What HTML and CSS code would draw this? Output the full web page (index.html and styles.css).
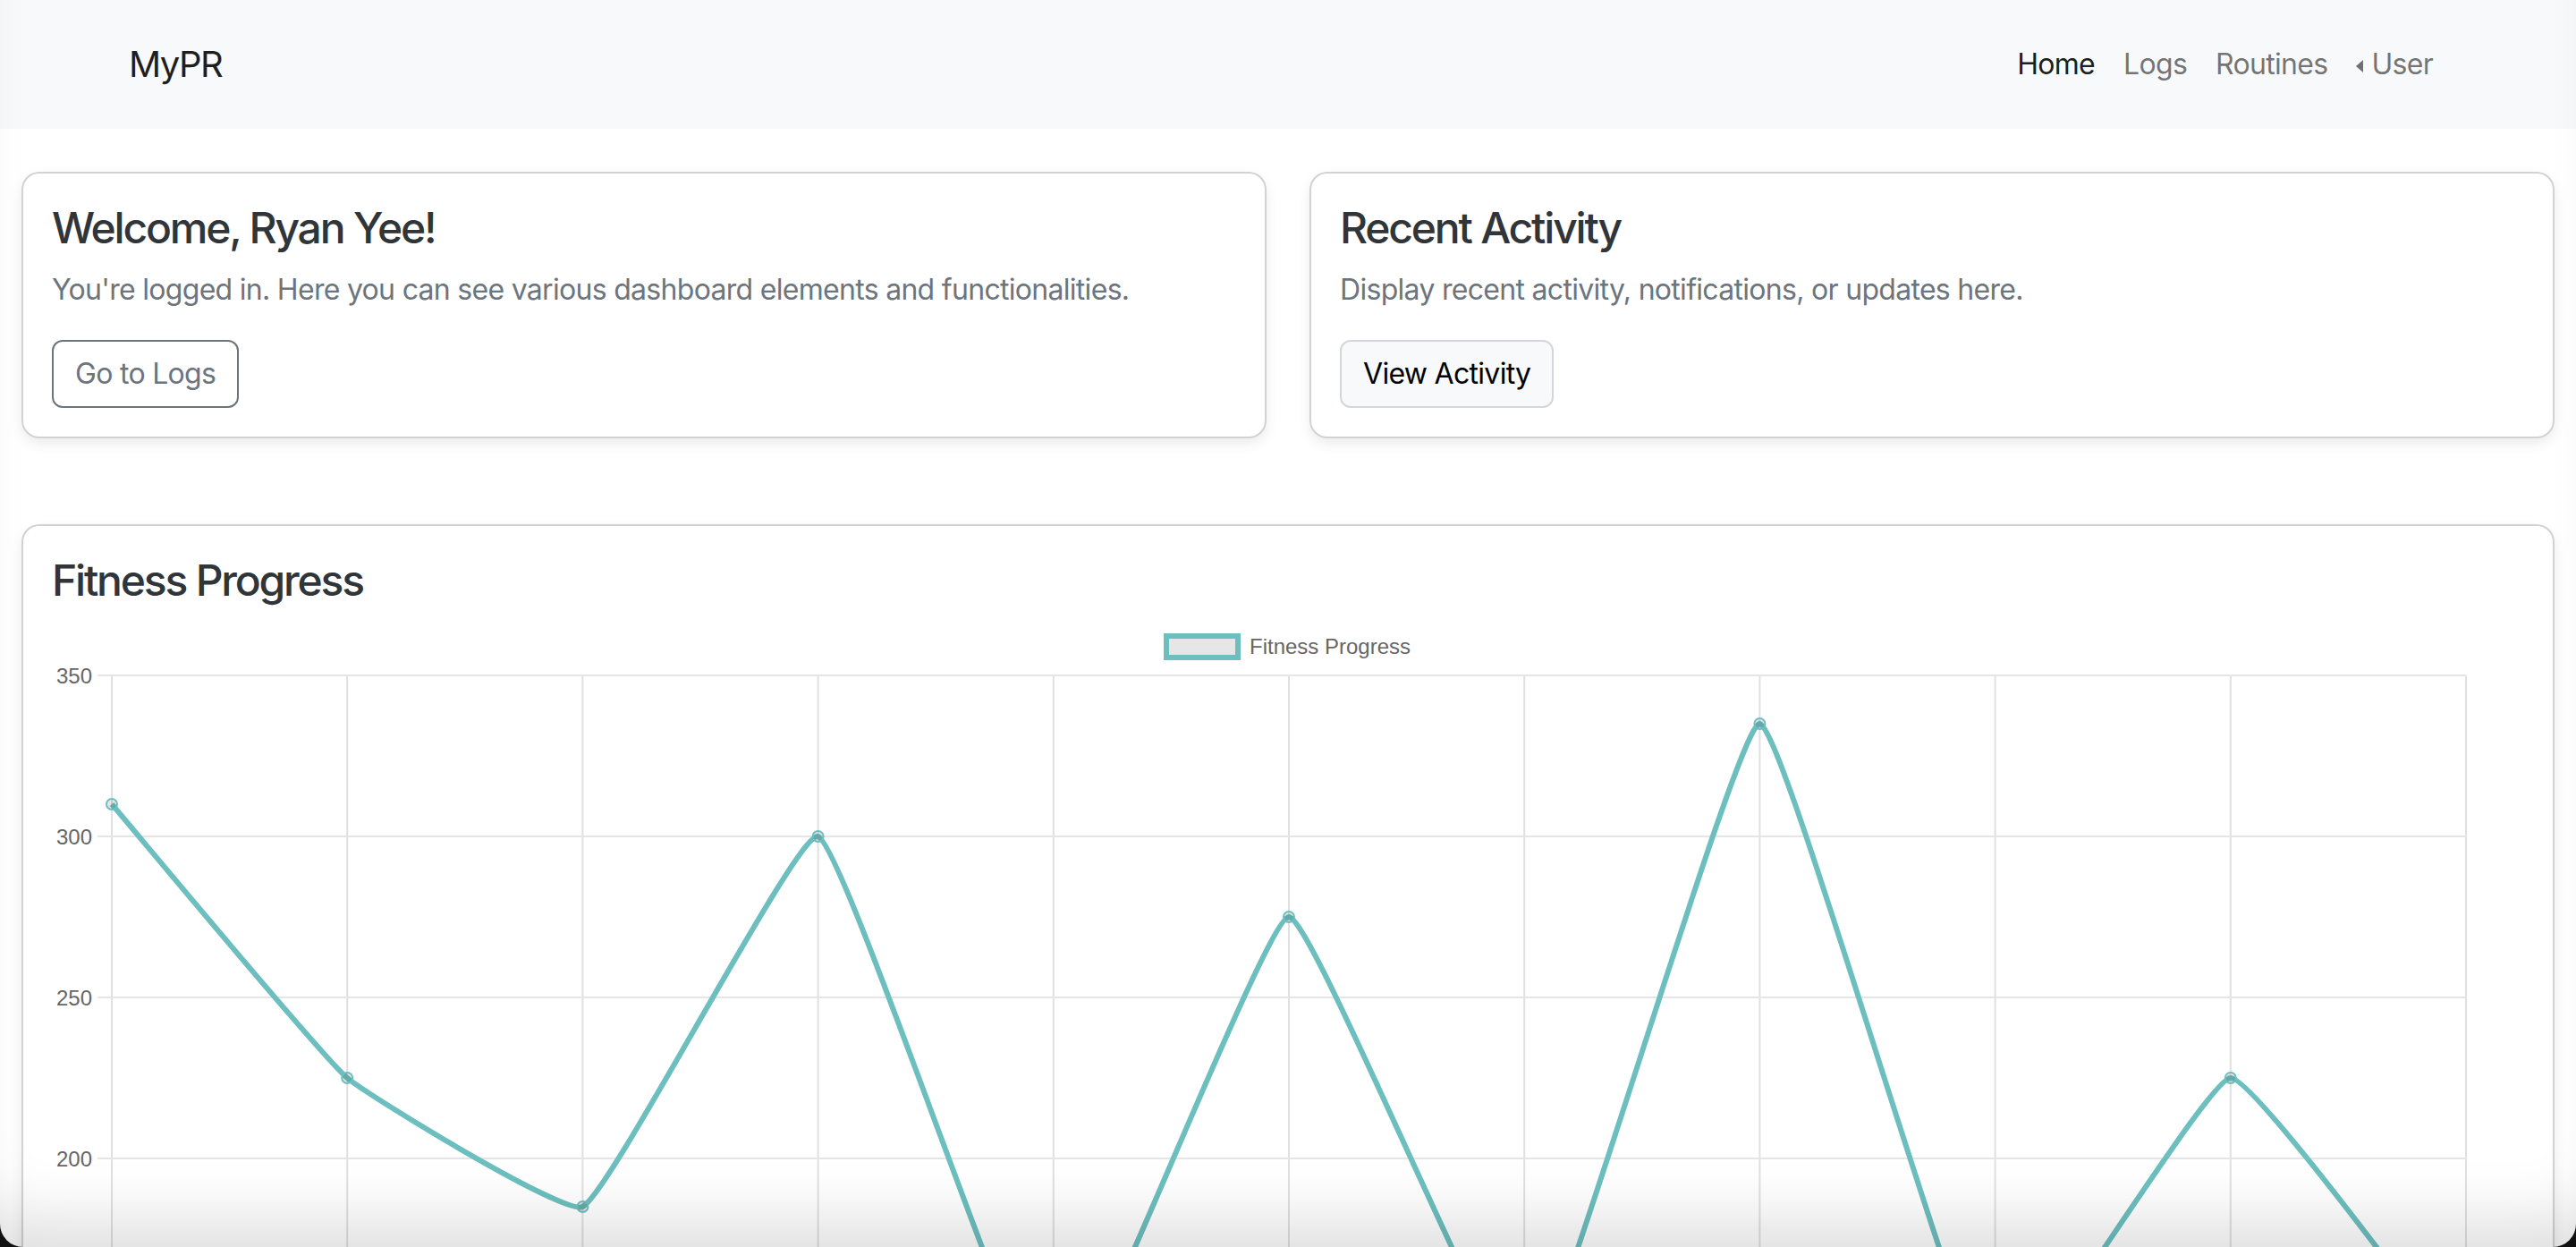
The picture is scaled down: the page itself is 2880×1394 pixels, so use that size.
FILE: index.html
```html
<!DOCTYPE html>
<html lang="en">
<head>
<meta charset="utf-8">
<title>MyPR</title>
<link rel="stylesheet" href="styles.css">
</head>
<body>
<nav class="navbar">
  <div class="navbar-inner">
    <a class="brand" href="#">MyPR</a>
    <ul class="nav-links">
      <li><a class="nav-link active" href="#">Home</a></li>
      <li><a class="nav-link" href="#">Logs</a></li>
      <li><a class="nav-link" href="#">Routines</a></li>
      <li><a class="nav-link dropstart" href="#">User</a></li>
    </ul>
  </div>
</nav>
<main class="page">
  <div class="row-two">
    <section class="card">
      <h4 class="card-title">Welcome, Ryan Yee!</h4>
      <p class="card-text">You're logged in. Here you can see various dashboard elements and functionalities.</p>
      <a class="btn btn-outline" href="#">Go to Logs</a>
    </section>
    <section class="card">
      <h4 class="card-title">Recent Activity</h4>
      <p class="card-text">Display recent activity, notifications, or updates here.</p>
      <a class="btn btn-light" href="#">View Activity</a>
    </section>
  </div>
  <section class="card chart-card">
    <h4 class="card-title">Fitness Progress</h4>
    <svg class="chart-svg" width="2764" height="1030" viewBox="0 0 2764 1030">
      <g class="legend">
        <rect x="1246" y="18" width="80" height="24" class="legend-box"/>
        <text x="1339" y="38" class="legend-text">Fitness Progress</text>
      </g>
      <g class="grid-v">
        <line x1="67" y1="62" x2="67" y2="978"/>
        <line x1="330.2" y1="62" x2="330.2" y2="978"/>
        <line x1="593.4" y1="62" x2="593.4" y2="978"/>
        <line x1="856.6" y1="62" x2="856.6" y2="978"/>
        <line x1="1119.8" y1="62" x2="1119.8" y2="978"/>
        <line x1="1383" y1="62" x2="1383" y2="978"/>
        <line x1="1646.2" y1="62" x2="1646.2" y2="978"/>
        <line x1="1909.4" y1="62" x2="1909.4" y2="978"/>
        <line x1="2172.6" y1="62" x2="2172.6" y2="978"/>
        <line x1="2435.8" y1="62" x2="2435.8" y2="978"/>
        <line x1="2699" y1="62" x2="2699" y2="978"/>
      </g>
      <g class="grid-h">
        <line x1="51" y1="62" x2="2699" y2="62"/>
        <line x1="51" y1="242" x2="2699" y2="242"/>
        <line x1="51" y1="422" x2="2699" y2="422"/>
        <line x1="51" y1="602" x2="2699" y2="602"/>
        <line x1="51" y1="782" x2="2699" y2="782"/>
        <line x1="51" y1="962" x2="2699" y2="962"/>
      </g>
      <g class="y-labels">
        <text x="45" y="70.5">350</text>
        <text x="45" y="250.5">300</text>
        <text x="45" y="430.5">250</text>
        <text x="45" y="610.5">200</text>
        <text x="45" y="790.5">150</text>
        <text x="45" y="970.5">100</text>
      </g>
      <path class="data-line" d=""/>
      <g class="data-points"></g>
    </svg>
  </section>
</main>
<div class="window-frame"></div>
<script src="chart.js"></script>
</body>
</html>
```

FILE: styles.css
```css
* { box-sizing: border-box; }

html, body {
  margin: 0;
  padding: 0;
}

body {
  background: #ffffff;
  color: #212529;
  font-family: "Inter", "Roboto", "Noto Sans", sans-serif;
  font-size: 32px;
  line-height: 1.5;
  letter-spacing: -0.7px;
}

a { text-decoration: none; }

.navbar {
  background: #f8f9fa;
}

.navbar-inner {
  max-width: 2640px;
  height: 144px;
  margin: 0 auto;
  padding: 0 24px;
  display: flex;
  align-items: center;
  justify-content: space-between;
}

.brand {
  font-size: 40px;
  line-height: 60px;
  letter-spacing: -1.5px;
  color: rgba(0, 0, 0, 0.9);
}

.nav-links {
  list-style: none;
  margin: 0;
  padding: 0;
  display: flex;
  align-items: center;
}

.nav-link {
  display: block;
  padding: 16px 16px;
  font-size: 32px;
  line-height: 48px;
  color: rgba(0, 0, 0, 0.55);
}

.nav-link.active {
  color: rgba(0, 0, 0, 0.9);
}

.dropstart::before {
  content: "";
  display: inline-block;
  margin-right: 9px;
  vertical-align: 2px;
  border-top: 7.5px solid transparent;
  border-bottom: 7.5px solid transparent;
  border-right: 8.5px solid currentColor;
  border-left: 0;
}

.page {
  padding: 48px 24px 0;
  display: flex;
  flex-direction: column;
  gap: 96px;
}

.row-two {
  display: grid;
  grid-template-columns: 1fr 1fr;
  gap: 48px;
}

.card {
  background: #fff;
  border: 2px solid rgba(0, 0, 0, 0.175);
  border-radius: 20px;
  padding: 32px;
  box-shadow: 0 6px 14px rgba(0, 0, 0, 0.08);
}

.card-title {
  margin: 0 0 16px;
  font-size: 48px;
  font-weight: 500;
  line-height: 1.2;
  letter-spacing: -2.2px;
  color: #30353a;
}

.card-text {
  margin: 0 0 32px;
  color: #6c757d;
}

.btn {
  display: inline-block;
  padding: 12px 24px;
  font-size: 32px;
  line-height: 48px;
  border: 2px solid transparent;
  border-radius: 12px;
}

.btn-outline {
  color: #6c757d;
  border-color: #6c757d;
}

.btn-light {
  color: #000;
  background: #f8f9fa;
  border-color: #d3d6da;
}

.chart-card {
  padding-bottom: 40px;
}

.chart-svg {
  display: block;
  font-family: "Liberation Sans", Arial, sans-serif;
  letter-spacing: 0;
}

.legend-box {
  fill: #e6e6e6;
  stroke: #6dbfbf;
  stroke-width: 6;
}

.legend-text {
  font-size: 24px;
  fill: #666;
}

.grid-v line {
  stroke: #e0e0e0;
  stroke-width: 2;
}

.grid-h line {
  stroke: #e5e5e5;
  stroke-width: 2;
}

.y-labels text {
  font-size: 24px;
  fill: #666;
  text-anchor: end;
}

.data-line {
  fill: none;
  stroke: #6dbfbf;
  stroke-width: 6;
  stroke-linejoin: round;
}

.data-points circle {
  fill: rgba(0, 0, 0, 0.1);
  stroke: #6dbfbf;
  stroke-width: 2;
}

.window-frame {
  position: fixed;
  inset: 0;
  pointer-events: none;
  border-radius: 0 0 26px 26px;
  box-shadow: 0 0 0 80px #111, inset 0 -70px 70px -40px rgba(0, 0, 0, 0.13);
}
```

FILE: chart.js
```js
(function () {
  var values = [310, 225, 185, 300, 122, 275, 131, 335, 128, 225, 136];
  var X0 = 67, DX = 263.2, Y0 = 62, PPU = 3.6, VMAX = 350, VMIN = 100;
  var tension = 0.1;
  function yOf(v) { return Y0 + (VMAX - v) * PPU; }
  var pts = values.map(function (v, i) { return { x: X0 + i * DX, y: yOf(v) }; });
  var left = X0, right = X0 + (values.length - 1) * DX, top = Y0, bottom = yOf(VMIN);
  function clampX(x) { return Math.max(left, Math.min(right, x)); }
  function clampY(y) { return Math.max(top, Math.min(bottom, y)); }
  var cps = pts.map(function (p, i) {
    var prev = pts[i - 1] || p, next = pts[i + 1] || p;
    var d01 = Math.hypot(p.x - prev.x, p.y - prev.y);
    var d12 = Math.hypot(next.x - p.x, next.y - p.y);
    var s01 = d01 / (d01 + d12), s12 = d12 / (d01 + d12);
    if (isNaN(s01)) s01 = 0;
    if (isNaN(s12)) s12 = 0;
    var fa = tension * s01, fb = tension * s12;
    return {
      px: clampX(p.x - fa * (next.x - prev.x)), py: clampY(p.y - fa * (next.y - prev.y)),
      nx: clampX(p.x + fb * (next.x - prev.x)), ny: clampY(p.y + fb * (next.y - prev.y))
    };
  });
  var d = 'M' + pts[0].x + ' ' + pts[0].y;
  for (var i = 1; i < pts.length; i++) {
    d += ' C' + cps[i - 1].nx.toFixed(2) + ' ' + cps[i - 1].ny.toFixed(2) + ' ' +
      cps[i].px.toFixed(2) + ' ' + cps[i].py.toFixed(2) + ' ' +
      pts[i].x.toFixed(2) + ' ' + pts[i].y.toFixed(2);
  }
  document.querySelector('.data-line').setAttribute('d', d);
  var g = document.querySelector('.data-points');
  var ns = 'http://www.w3.org/2000/svg';
  pts.forEach(function (p) {
    var c = document.createElementNS(ns, 'circle');
    c.setAttribute('cx', p.x);
    c.setAttribute('cy', p.y);
    c.setAttribute('r', 6);
    g.appendChild(c);
  });
})();
```
